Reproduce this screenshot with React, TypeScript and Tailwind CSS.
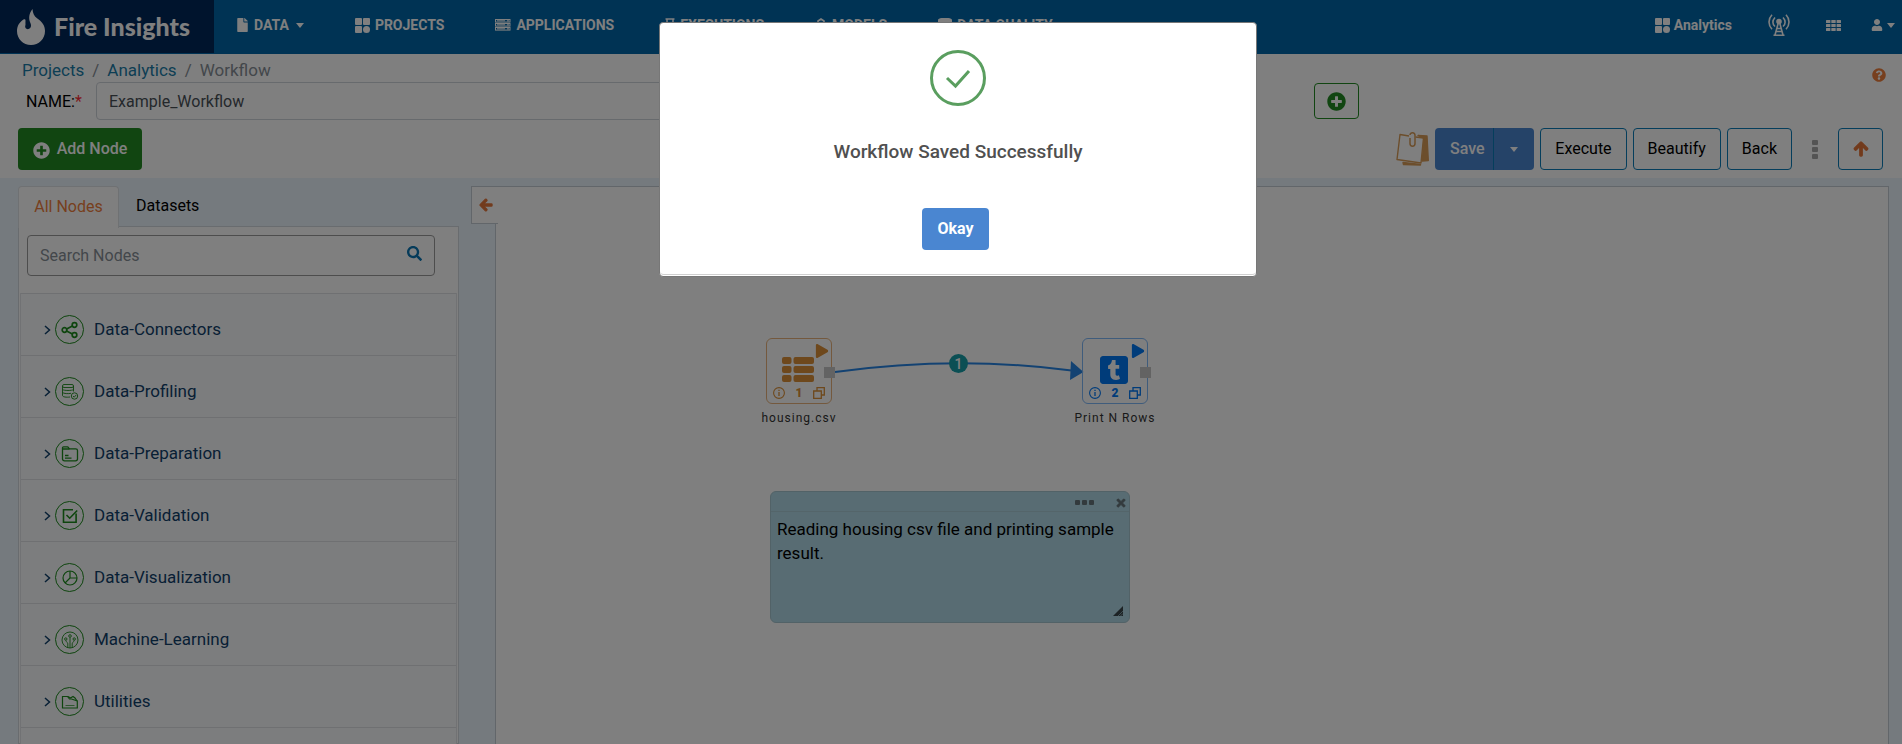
import type { ReactNode } from "react";
import {
  FaArrowLeft,
  FaArrowUp,
  FaFile,
  FaPlay,
  FaPlusCircle,
  FaQuestionCircle,
  FaSearch,
  FaTimes,
  FaTumblrSquare,
  FaUser,
} from "react-icons/fa";

function FlameLogo() {
  return (
    <svg viewBox="0 0 28 36" className="h-9 w-7 shrink-0" fill="#fff" aria-hidden="true">
      <path d="M15.500 0c.2 4 1.500 7 4.500 9.300C24.800 12.500 28 16.500 28 22c0 8-6.200 14-14 14S0 30 0 22c0-5 2.500-9 6.500-11.500.9-.5 2-.2 2 .8.1 1.700-.2 3.200 0 4.700-.5 1-.4 2 .1 3 .8 1.500 3.400 1.500 4.600 0 1.200-1.600.9-3.700 0-5.500C11.500 9.700 11.800 4.300 15.500 0z" />
    </svg>
  );
}

function Caret() {
  return (
    <svg viewBox="0 0 8 5" className="h-[5px] w-2" fill="currentColor" aria-hidden="true">
      <path d="M0 0h8L4 5z" />
    </svg>
  );
}

function ProjectsIcon() {
  return (
    <svg viewBox="0 0 15 15" className="h-[15px] w-[15px]" fill="currentColor" aria-hidden="true">
      <rect x="0" y="0" width="7" height="7" rx="1" />
      <rect x="8" y="0" width="7" height="7" rx="1" />
      <rect x="0" y="8" width="7" height="7" rx="1" />
      <circle cx="11.500" cy="11.500" r="3.500" />
    </svg>
  );
}

function ServerIcon() {
  return (
    <svg viewBox="0 0 16 12" className="h-3 w-4" aria-hidden="true">
      {[0, 4, 8].map((y) => (
        <g key={y}>
          <rect x=".5" y={y + 0.5} width="14.500" height="2.600" fill="none" stroke="currentColor" />
          <rect x="2" y={y + 1.3} width="8" height="1" fill="currentColor" />
          <circle cx="13" cy={y + 1.8} r=".9" fill="currentColor" />
        </g>
      ))}
    </svg>
  );
}

function HourglassIcon() {
  return (
    <svg viewBox="0 0 9 14" className="h-3.5 w-2.5" fill="none" stroke="currentColor" strokeWidth="1.500" aria-hidden="true">
      <path d="M0 1h9M0 13h9M1.500 1v3l3 3 3-3V1M1.500 13v-3l3-3 3 3v3" />
    </svg>
  );
}

function ModelsIcon() {
  return (
    <svg viewBox="0 0 12 14" className="h-3.5 w-3" fill="none" stroke="currentColor" strokeWidth="1.600" aria-hidden="true">
      <path d="M3 5V3l3-2 3 2v2M1 5h10v4l-3 4H4L1 9z" />
    </svg>
  );
}

function DatabaseIcon() {
  return (
    <svg viewBox="0 0 14 14" className="h-3.5 w-3.5" fill="currentColor" aria-hidden="true">
      <path d="M0 2c0-3 14-3 14 0v2c0 2.500-14 2.500-14 0zM0 6c2 2 12 2 14 0v2.500c0 2.500-14 2.500-14 0zM0 10.500c2 2 12 2 14 0V12c0 2.700-14 2.700-14 0z" />
    </svg>
  );
}

function AntennaIcon() {
  return (
    <svg viewBox="0 0 22 22" className="h-[22px] w-[22px]" fill="none" stroke="currentColor" strokeWidth="1.600" aria-hidden="true">
      <path d="M4 .8C0 5 0 11 4 15.200M18 .8c4 4.200 4 10.200 0 14.400M7 3.500c-2.800 3-2.800 6.500 0 9M15 3.500c2.800 3 2.800 6.500 0 9" />
      <circle cx="11" cy="7.500" r="2" fill="currentColor" />
      <path d="M10.300 9 7 21M11.700 9 15 21M5.500 21.200h11M9 14.500h4M8.200 17.500h5.600" />
    </svg>
  );
}

function GridIcon() {
  return (
    <svg viewBox="0 0 15 11" className="h-[11px] w-[15px]" fill="currentColor" aria-hidden="true">
      {[0, 4, 8].map((y) => [0, 5.3, 10.6].map((x) => <rect key={`${x}-${y}`} x={x} y={y} width="4.400" height="3" rx=".5" />))}
    </svg>
  );
}

function NotesIcon() {
  return (
    <svg viewBox="0 0 33 34" className="h-[34px] w-[33px]" fill="none" stroke="#d99c58" strokeWidth="1.400" strokeLinejoin="round" aria-hidden="true">
      <path d="M13 4 4 2.500 1 27.500l24 3.500L27.500 6l-8-1" />
      <path d="M22 3.500 31 4l1.300 24.500-6 .5 1.700-23z" fill="#d99c58" />
      <path d="M7 30.500l.5 2 17 .5v-.5z" fill="#d99c58" />
      <path d="M14 6v5.500c0 3.500 5 3.500 5 0V3.500c0-3.500-5-3.500-5-.5" strokeWidth="1.500" />
    </svg>
  );
}

function NavItem({ icon, label, caret }: { icon: ReactNode; label: string; caret?: boolean }) {
  return (
    <a href="#" className="flex items-center gap-[5px] text-sm font-bold text-white">
      {icon}
      <span className="whitespace-nowrap">{label}</span>
      {caret && (
        <span className="ml-0.5">
          <Caret />
        </span>
      )}
    </a>
  );
}

function TopBar() {
  return (
    <header className="flex h-[54px] items-stretch bg-[#0066a9] text-white">
      <a href="#" className="flex h-[53px] w-[214px] shrink-0 items-center gap-[9px] bg-[#00285a] pl-[17px] font-['Lato',sans-serif] text-[25px] font-black whitespace-nowrap">
        <FlameLogo />
        Fire Insights
      </a>
      <nav className="flex h-[50px] items-center gap-[51px] pl-[22px]">
        <NavItem icon={<FaFile className="h-3.5 w-[13px]" />} label="DATA" caret />
        <NavItem icon={<ProjectsIcon />} label="PROJECTS" />
        <NavItem icon={<ServerIcon />} label="APPLICATIONS" />
        <NavItem icon={<HourglassIcon />} label="EXECUTIONS" />
        <NavItem icon={<ModelsIcon />} label="MODELS" />
        <NavItem icon={<DatabaseIcon />} label="DATA QUALITY" />
      </nav>
      <div className="ml-auto flex h-[50px] items-center gap-9 pr-[7px]">
        <a href="#" className="flex items-center gap-1 text-sm font-bold">
          <ProjectsIcon />
          Analytics
        </a>
        <button type="button" aria-label="Broadcast">
          <AntennaIcon />
        </button>
        <button type="button" aria-label="Apps">
          <GridIcon />
        </button>
        <button type="button" aria-label="Account" className="-ml-1.5 flex items-center gap-1">
          <FaUser className="h-3 w-3" />
          <Caret />
        </button>
      </div>
    </header>
  );
}

function Toolbar() {
  const outline = "h-[42px] rounded border border-[#0a7cb8] px-3.5 text-base text-black";
  return (
    <section className="bg-white">
      <div className="flex h-7 items-center justify-between pr-4 pl-[22px]">
        <nav aria-label="Breadcrumb" className="flex items-center gap-2 pt-[3px] text-[17px] leading-6 text-[#868e96]">
          <a href="#" className="text-[#1a7ca8]">Projects</a>
          <span>/</span>
          <a href="#" className="text-[#1a7ca8]">Analytics</a>
          <span>/</span>
          <span>Workflow</span>
        </nav>
        <button type="button" aria-label="Help" className="pt-3.5 text-[#ef7f3c]">
          <FaQuestionCircle className="h-3.5 w-3.5" />
        </button>
      </div>
      <div className="flex h-[38px] items-center pl-[26px]">
        <label htmlFor="name" className="w-[70px] shrink-0 pt-px text-base text-black">
          NAME:<span className="text-red-500">*</span>
        </label>
        <input id="name" defaultValue="Example_Workflow" className="h-[38px] w-3/5 rounded border border-[#ced4da] bg-white px-3 text-base text-[#495057]" />
        <div className="flex-1" />
        <button type="button" aria-label="Add parameter" className="mr-[543px] flex h-9 w-[45px] items-center justify-center rounded border border-[#228b22] text-[#228b22]">
          <FaPlusCircle className="h-[19px] w-[19px]" />
        </button>
      </div>
      <div className="flex items-center pt-2 pr-[19px] pb-2 pl-[18px]">
        <button type="button" className="flex h-[42px] w-[124px] items-center justify-center gap-[7px] rounded bg-[#228b22] text-base font-medium text-white">
          <FaPlusCircle className="mt-0.5 h-[17px] w-[17px]" />
          Add Node
        </button>
        <div className="ml-auto flex items-center gap-1.5">
          <button type="button" aria-label="Notes">
            <NotesIcon />
          </button>
          <div className="flex h-[42px] overflow-hidden rounded bg-[#4a86d1] text-base font-medium text-white">
            <button type="button" className="w-[59px] border-r border-[#0a7cb8] pl-1.5">Save</button>
            <button type="button" aria-label="Save options" className="flex w-10 items-center justify-center">
              <Caret />
            </button>
          </div>
          <button type="button" className={outline}>Execute</button>
          <button type="button" className={outline}>Beautify</button>
          <button type="button" className={outline}>Back</button>
          <button type="button" aria-label="More" className="flex w-[34px] flex-col items-center gap-0.5">
            <span className="h-[5px] w-1.5 rounded-[1px] bg-[#a8a8a8]" />
            <span className="h-[5px] w-1.5 rounded-[1px] bg-[#a8a8a8]" />
            <span className="h-[5px] w-1.5 rounded-[1px] bg-[#a8a8a8]" />
          </button>
          <button type="button" aria-label="Collapse toolbar" className="flex h-[42px] w-[45px] items-center justify-center rounded border border-[#0a7cb8] text-[#e5763a]">
            <FaArrowUp className="h-4 w-4" stroke="currentColor" strokeWidth="40" />
          </button>
        </div>
      </div>
    </section>
  );
}

const categories: { name: string; icon: ReactNode }[] = [
  {
    name: "Data-Connectors",
    icon: (
      <g strokeWidth="1.700">
        <circle cx="3.500" cy="9" r="2.300" />
        <circle cx="13.500" cy="4" r="2.300" />
        <circle cx="13.500" cy="14" r="2.300" />
        <path d="m5.600 8 5.800-3M5.600 10l5.800 3" />
      </g>
    ),
  },
  {
    name: "Data-Profiling",
    icon: (
      <g strokeWidth=".9">
        <rect x="1.500" y="1.500" width="11" height="3" rx="1.500" />
        <path d="M1.500 3v9.500c0 1.500 4 2 7.500 1.500M12.500 3v5.500M1.500 6.500c1 1.300 10 1.300 11 0M1.500 9.500c1 1.200 6 1.400 8.500.8" />
        <circle cx="13.500" cy="13" r="3.200" />
        <path d="m12 13 1.200 1.200 2-2.200" />
      </g>
    ),
  },
  {
    name: "Data-Preparation",
    icon: (
      <g strokeWidth="1.300">
        <path d="M1.500 14V2.800c0-.6.400-1 1-1h4c1 0 1.200 2 2.200 2h6c1.200 0 1.800.6 1.800 1.700V14c0 1.200-.8 1.800-2 1.800h-11c-1.200 0-2-.6-2-1.800z" />
        <path d="M1.500 4h7M4 10.500h3.500M4 13.200h6.500" />
      </g>
    ),
  },
  {
    name: "Data-Validation",
    icon: (
      <g strokeWidth="1.600">
        <path d="M12 2.800H2.500v12.400h12.600V6.500" />
        <path d="m5.500 8 3.200 3.200 7.500-7.700" />
      </g>
    ),
  },
  {
    name: "Data-Visualization",
    icon: (
      <g strokeWidth="1.200">
        <circle cx="9" cy="9" r="7" />
        <path d="M9 2v7h7M9 9l-5 5" />
      </g>
    ),
  },
  {
    name: "Machine-Learning",
    icon: (
      <g strokeWidth=".9">
        <circle cx="9" cy="9" r="8" />
        <circle cx="9" cy="5" r="1.300" />
        <circle cx="4.800" cy="8" r="1.200" />
        <circle cx="13.200" cy="8" r="1.200" />
        <path d="M9 6.500V17M4.800 9.300c0 2 2 1.500 2 3.500v3.700M13.200 9.300c0 2-2 1.500-2 3.500v3.700" />
      </g>
    ),
  },
  {
    name: "Utilities",
    icon: (
      <g strokeWidth="1.200">
        <path d="M1.500 15V3.500h5l2 2.500h2l5.800 2v7z" />
        <path d="M7 3.500 9.500 5 12 3.500l2 1.500 2 3" />
        <path d="M4.500 12.500h9" strokeWidth=".7" />
      </g>
    ),
  },
];

function Sidebar() {
  return (
    <aside className="flex w-[441px] shrink-0 flex-col">
      <div role="tablist" className="relative z-10 flex h-[41px] text-base">
        <button type="button" role="tab" aria-selected="true" className="-mb-px w-[101px] rounded-t border border-b-0 border-[#dee2e6] bg-white pb-0.5 text-[#ef7f3c]">
          All Nodes
        </button>
        <button type="button" role="tab" aria-selected="false" className="px-[17px] pb-0.5 text-black">
          Datasets
        </button>
      </div>
      <div className="-mt-px min-h-0 flex-1 border border-[#d3d9de] bg-white px-px">
        <div className="relative mt-2 mr-[22px] ml-[7px]">
          <input type="search" aria-label="Search Nodes" placeholder="Search Nodes" className="block h-[41px] w-full rounded border border-[#9a9a9a] bg-white px-3 text-base placeholder:text-[#868e96]" />
          <button type="button" aria-label="Search" className="absolute top-[11px] right-[13px] text-[#0b76b4]">
            <FaSearch className="h-[15px] w-[15px]" />
          </button>
        </div>
        <ul className="mt-[17px] border-x border-[#e3e5e8] bg-[#f9fafc]">
          {categories.map((c) => (
            <li key={c.name} className="h-[62px] border-t border-[#dfe1e4]">
              <a href="#" className="flex h-full items-center pt-2.5 pl-[23px] text-[17px] text-[#10406b]">
                <svg viewBox="0 0 7 10" className="h-2.5 w-[7px]" fill="none" stroke="currentColor" strokeWidth="1.500" aria-hidden="true">
                  <path d="m1 1 4.500 4L1 9" />
                </svg>
                <span className="ml-1 flex h-[29px] w-[29px] items-center justify-center rounded-full border border-[#1c8b1c]">
                  <svg viewBox="0 0 18 18" className="h-[18px] w-[18px]" fill="none" stroke="#1c8b1c" aria-hidden="true">
                    {c.icon}
                  </svg>
                </span>
                <span className="ml-2.5">{c.name}</span>
              </a>
            </li>
          ))}
          <li className="h-[62px] border-t border-[#dfe1e4]" />
        </ul>
      </div>
    </aside>
  );
}

function NodeGlyphs({ id }: { id: string }) {
  return (
    <div className="absolute inset-x-1.5 bottom-1 flex items-center justify-between text-xs leading-3 font-black">
      <svg viewBox="0 0 12 12" className="h-3 w-3" fill="none" stroke="currentColor" aria-hidden="true">
        <circle cx="6" cy="6" r="5.400" strokeWidth="1.100" />
        <path d="M6 5v4M6 2.700v1.300" strokeWidth="1.300" />
      </svg>
      {id}
      <svg viewBox="0 0 12 12" className="h-3 w-3" fill="none" stroke="currentColor" strokeWidth="1.300" aria-hidden="true">
        <path d="M.7 4h7.600v7.300H.7zM4 4V.7h7.300V8H8.300" />
      </svg>
    </div>
  );
}

function NodeLabel({ children }: { children: ReactNode }) {
  return (
    <span className="absolute top-[71px] left-1/2 -translate-x-1/2 text-xs tracking-[1px] whitespace-nowrap text-[#333]">
      {children}
    </span>
  );
}

function Canvas() {
  return (
    <main className="relative mr-[13px] ml-9 min-w-0 flex-1 border border-b-0 border-[#c4ccd4] bg-white">
      <button type="button" aria-label="Collapse nodes" className="absolute -top-px -left-[25px] flex h-[38px] w-[27px] items-center border border-r-0 border-[#c4ccd4] bg-white pl-[7px] text-[#e5763a]">
        <FaArrowLeft className="h-3.5 w-3.5" stroke="currentColor" strokeWidth="40" />
      </button>
      <svg className="absolute inset-0 h-full w-full" aria-hidden="true">
        <path d="M339 185Q462 168 580 184" fill="none" stroke="#2684e4" strokeWidth="2" />
        <path d="M575 174l12.500 11L574 193z" fill="#2684e4" />
      </svg>
      <span className="absolute top-[167px] left-[453px] flex h-[19px] w-[19px] items-center justify-center rounded-full bg-[#179fa8] text-sm font-medium text-white">1</span>

      <div className="absolute top-[151px] left-[270px] h-[66px] w-[66px] rounded-md border border-[#e8b37c] text-[#dc9138]">
        <svg viewBox="0 0 32 25" className="absolute top-[18px] left-[15px] h-[25px] w-8" fill="currentColor" aria-hidden="true">
          {[0, 9, 18].map((y) => (
            <g key={y}>
              <rect x="0" y={y} width="9.500" height="7" rx="2" />
              <rect x="11.500" y={y} width="20.500" height="7" rx="2" />
            </g>
          ))}
        </svg>
        <FaPlay className="absolute top-[5px] left-12 h-3.5 w-3.5" />
        <NodeGlyphs id="1" />
        <span className="absolute top-7 left-[57px] h-[11px] w-[11px] bg-[#c6c6c6]" />
        <NodeLabel>housing.csv</NodeLabel>
      </div>

      <div className="absolute top-[151px] left-[586px] h-[66px] w-[66px] rounded-md border border-[#7fb8f8] text-[#0078f5]">
        <FaTumblrSquare className="absolute top-[15px] left-[15px] h-8 w-8" />
        <FaPlay className="absolute top-[5px] left-12 h-3.5 w-3.5" />
        <NodeGlyphs id="2" />
        <span className="absolute top-7 left-[57px] h-[11px] w-[11px] bg-[#c6c6c6]" />
        <NodeLabel>Print N Rows</NodeLabel>
      </div>

      <div className="absolute top-[304px] left-[274px] flex h-[132px] w-[360px] flex-col rounded-md border border-[#a5c4ce] bg-[#b0d9e6]">
        <div className="flex h-5 shrink-0 items-center justify-end border-b border-[#a9cbd5] pt-0.5 pr-0.5 text-[#66757a]">
          <button type="button" aria-label="Note options" className="mr-[21px] flex gap-0.5">
            <span className="h-[5px] w-[5px] rounded-[1px] bg-[#66757a]" />
            <span className="h-[5px] w-[5px] rounded-[1px] bg-[#66757a]" />
            <span className="h-[5px] w-[5px] rounded-[1px] bg-[#66757a]" />
          </button>
          <button type="button" aria-label="Close note">
            <FaTimes className="h-3 w-3" stroke="currentColor" strokeWidth="30" />
          </button>
        </div>
        <p className="px-1.5 pt-[5px] text-[17px] leading-6 text-black">Reading housing csv file and printing sample result.</p>
        <svg viewBox="0 0 10 10" className="absolute right-1.5 bottom-1.5 h-2.5 w-2.5" aria-hidden="true">
          <path d="M10 0v10H0z" fill="#3a464a" />
          <path d="m5 10 5-5M7.500 10 10 7.500" stroke="#b0d9e6" strokeWidth=".6" />
        </svg>
      </div>
    </main>
  );
}

function SavedDialog() {
  return (
    <div className="fixed inset-0 z-50 flex items-start justify-center bg-black/50 pt-[22px] pl-3.5">
      <div role="dialog" aria-modal="true" aria-labelledby="saved-title" className="w-[598px] rounded border border-[#777] bg-white pb-px">
        <div className="flex flex-col items-center rounded-b border-b border-[#d0d0d0] pt-[27px] pb-6">
          <svg viewBox="0 0 56 56" className="h-14 w-14" fill="none" stroke="#5a9e5f" strokeWidth="3" aria-hidden="true">
            <circle cx="28" cy="28" r="26.500" />
            <path d="m17 28 8.500 8L39 21" />
          </svg>
          <h2 id="saved-title" className="mt-8 text-[19px] leading-7 font-medium text-[#505050]">Workflow Saved Successfully</h2>
          <button type="button" className="mt-[42px] mr-[5px] h-[42px] w-[67px] rounded bg-[#4a86d1] text-base font-bold text-white">Okay</button>
        </div>
      </div>
    </div>
  );
}

export default function App() {
  return (
    <div className="flex h-screen flex-col overflow-hidden bg-[#ebf5fd] font-['Roboto',sans-serif]">
      <TopBar />
      <Toolbar />
      <div className="flex min-h-0 flex-1 pt-2 pl-[18px]">
        <Sidebar />
        <Canvas />
      </div>
      <SavedDialog />
    </div>
  );
}
